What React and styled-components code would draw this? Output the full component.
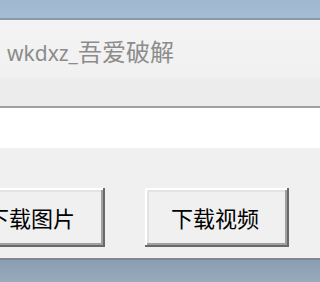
import React from "react";
import styled, { createGlobalStyle } from "styled-components";

const Global = createGlobalStyle`
  html, body { margin: 0; padding: 0; background: #f0f0f0; }
  body { min-width: 247px; height: 282px; overflow: hidden; }
`;

const Frame = styled.div`
  width: 100%;
  min-width: 247px;
  height: 282px;
  overflow: hidden;
  display: flex;
  flex-direction: column;
  background: #f0f0f0;
`;

const TopBar = styled.div`
  height: 18px;
  flex: none;
  background: linear-gradient(to bottom, #9fb7cf, #a6bed5);
  border-bottom: 2px solid #8c99a6;
`;

const TitlePanel = styled.div`
  height: 88px;
  flex: none;
  box-sizing: border-box;
  padding: 19px 7px 0;
  background: linear-gradient(
    to bottom,
    #f3f3f3 0%,
    #f1f1f1 66%,
    #ececec 70%,
    #ececec 100%
  );
  border-bottom: 2px solid #a0a0a0;
  display: flex;
  align-items: baseline;
  white-space: nowrap;
  color: #8c8c8c;
  font-family: "Noto Sans CJK SC", "Noto Sans", sans-serif;
  font-size: 24px;
  line-height: 24px;
`;

const Latin = styled.span`
  font-family: "Noto Sans", "Noto Sans CJK SC", sans-serif;
  font-size: 21px;
`;

const Field = styled.div`
  height: 40px;
  flex: none;
  background: #ffffff;
`;

const ButtonArea = styled.div`
  height: 110px;
  flex: none;
  box-sizing: border-box;
  padding-top: 40px;
  display: flex;
  gap: 40px;
  margin-left: -39px;
  background: #f0f0f0;
`;

const Button = styled.div`
  width: 144px;
  height: 59px;
  flex: none;
  box-sizing: border-box;
  background: #f0f0f0;
  box-shadow: inset -2px -2px #696969, inset 2px 2px #ffffff,
    inset -4px -4px #a0a0a0, inset 4px 4px #e3e3e3;
  display: flex;
  align-items: center;
  justify-content: center;
  color: #000;
  font-family: "Noto Sans CJK SC", sans-serif;
  font-size: 22px;
  padding: 0 4px 1px 0;
  white-space: nowrap;
`;

const BottomBar = styled.div`
  flex: 1;
  border-top: 2px solid #7c8791;
  background: linear-gradient(to bottom, #8b9eb1, #98aabc);
`;

export default function App() {
  return (
    <>
      <Global />
      <Frame>
        <TopBar />
        <TitlePanel>
          <Latin>wkdxz_</Latin>
          <span>吾爱破解</span>
        </TitlePanel>
        <Field />
        <ButtonArea>
          <Button>下载图片</Button>
          <Button>下载视频</Button>
        </ButtonArea>
        <BottomBar />
      </Frame>
    </>
  );
}
